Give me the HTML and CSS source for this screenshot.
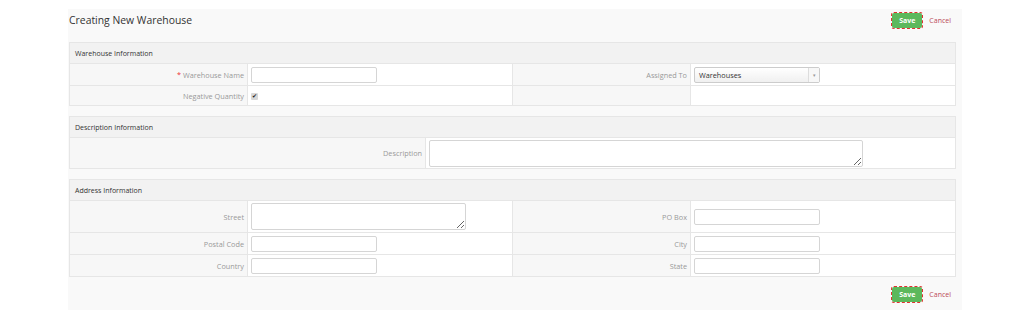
FILE: index.html
```html
<!DOCTYPE html>
<html lang="en">
<head>
    <meta charset="UTF-8">
    <title>Creating New Warehouse</title>
    <link rel="stylesheet" href="styles.css">
</head>
<body>

    <div class="page">
        <!-- Title bar -->
        <div class="page-head">
            <h2>Creating New Warehouse</h2>
            <div class="actions">
                <button type="button" class="btn-save">Save</button>
                <a href="#" class="cancel">Cancel</a>
            </div>
        </div>

        <!-- Warehouse Information -->
        <table class="block">
            <colgroup>
                <col class="c-lbl"><col class="c-val"><col class="c-lbl"><col class="c-val">
            </colgroup>
            <tr><th colspan="4">Warehouse Information</th></tr>
            <tr>
                <td class="lbl"><span class="req">*</span> Warehouse Name</td>
                <td class="val"><input type="text" class="field"></td>
                <td class="lbl">Assigned To</td>
                <td class="val">
                    <div class="picker">
                        <span>Warehouses</span>
                        <span class="arrow">&#9662;</span>
                    </div>
                </td>
            </tr>
            <tr class="short">
                <td class="lbl">Negative Quantity</td>
                <td class="val"><span class="check">&#10004;</span></td>
                <td class="lbl"></td>
                <td class="val"></td>
            </tr>
        </table>

        <!-- Description Information -->
        <table class="block">
            <colgroup>
                <col class="c-wide"><col>
            </colgroup>
            <tr><th colspan="2">Description Information</th></tr>
            <tr class="desc-row">
                <td class="lbl">Description</td>
                <td class="val"><textarea class="area desc"></textarea></td>
            </tr>
        </table>

        <!-- Address Information -->
        <table class="block">
            <colgroup>
                <col class="c-lbl"><col class="c-val"><col class="c-lbl"><col class="c-val">
            </colgroup>
            <tr><th colspan="4">Address Information</th></tr>
            <tr class="tall">
                <td class="lbl">Street</td>
                <td class="val"><textarea class="area street"></textarea></td>
                <td class="lbl">PO Box</td>
                <td class="val"><input type="text" class="field"></td>
            </tr>
            <tr>
                <td class="lbl">Postal Code</td>
                <td class="val"><input type="text" class="field"></td>
                <td class="lbl">City</td>
                <td class="val"><input type="text" class="field"></td>
            </tr>
            <tr>
                <td class="lbl">Country</td>
                <td class="val"><input type="text" class="field"></td>
                <td class="lbl">State</td>
                <td class="val"><input type="text" class="field"></td>
            </tr>
        </table>

        <!-- Bottom buttons -->
        <div class="page-foot">
            <div class="actions">
                <button type="button" class="btn-save">Save</button>
                <a href="#" class="cancel">Cancel</a>
            </div>
        </div>
    </div>

</body>
</html>
```

FILE: styles.css
```css
body {
    margin: 0;
    background: #fff;
    font-family: "Open Sans", "Liberation Sans", sans-serif;
}

/* Main panel */
.page {
    width: 894px;
    margin: 9px 0 0 68px;
    padding: 0 0 8px 1px;
    box-sizing: border-box;
    background: #f9f9f9;
}

.page-head {
    display: flex;
    justify-content: space-between;
    align-items: center;
    height: 22px;
    padding: 0 11px 0 0;
    margin-bottom: 11px;
}

.page-head h2 {
    margin: 0;
    font-size: 10.4px;
    font-weight: normal;
    color: #333;
}

.page-foot {
    display: flex;
    justify-content: flex-end;
    padding: 0 11px 0 0;
}

.actions {
    display: flex;
    align-items: center;
    gap: 7px;
}

/* Save button with dashed focus ring */
.btn-save {
    width: 30px;
    height: 15px;
    padding: 0;
    border: none;
    border-radius: 2px;
    background: #5cb85c;
    color: #fff;
    font-family: inherit;
    font-size: 7px;
    font-weight: bold;
    outline: 1px dashed #e0312f;
    outline-offset: 0;
    cursor: pointer;
}

.cancel {
    color: #b94a58;
    font-size: 7px;
    text-decoration: none;
}

/* Info blocks */
.block {
    width: 887px;
    border-collapse: collapse;
    table-layout: fixed;
    margin-bottom: 10px;
    font-size: 7px;
}

.c-lbl {
    width: 178px;
}

.c-val {
    width: 265px;
}

.c-wide {
    width: 356px;
}

.block th {
    height: 20px;
    padding: 0 5px;
    text-align: left;
    font-weight: normal;
    color: #333;
    background: #f2f2f2;
    border: 1px solid #e6e6e6;
}

.block td {
    height: 21px;
    border: 1px solid #e6e6e6;
    padding: 0 3px;
}

.block tr.short td {
    height: 19px;
}

.block tr.tall td {
    height: 31px;
}

.block tr.desc-row td {
    height: 30px;
}

.lbl {
    text-align: right;
    color: #999;
    background: #f7f7f7;
    font-size: 7.3px;
}

.val {
    background: #fff;
}

.req {
    color: #e33;
}

.field {
    display: block;
    width: 126px;
    height: 16px;
    box-sizing: border-box;
    border: 1px solid #d5d5d5;
    border-radius: 2px;
    background: #fff;
}

.area {
    display: block;
    box-sizing: border-box;
    border: 1px solid #d5d5d5;
    border-radius: 2px;
    background: #fff;
    resize: vertical;
}

.area.desc {
    width: 434px;
    height: 27px;
}

.area.street {
    width: 215px;
    height: 27px;
}

.picker {
    display: flex;
    justify-content: space-between;
    align-items: center;
    width: 126px;
    height: 16px;
    box-sizing: border-box;
    padding-left: 4px;
    border: 1px solid #ccc;
    border-radius: 2px;
    color: #333;
    font-size: 7.3px;
    background: linear-gradient(#fff, #f0f0f0);
}

.picker .arrow {
    width: 10px;
    height: 14px;
    line-height: 14px;
    text-align: center;
    border-left: 1px solid #ddd;
    color: #999;
    font-size: 5px;
    background: #f7f7f7;
}

.check {
    display: inline-block;
    width: 7px;
    height: 7px;
    line-height: 7px;
    text-align: center;
    border-radius: 1px;
    background: #d8d8d8;
    color: #222;
    font-size: 6px;
}
```
